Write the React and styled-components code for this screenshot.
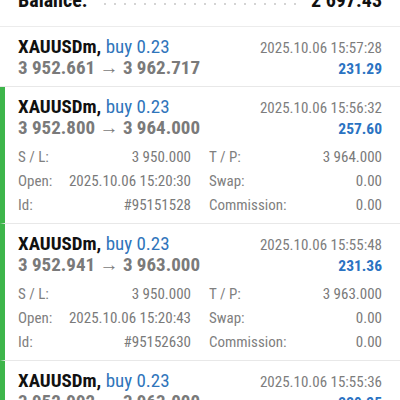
import React from 'react';
import styled, { createGlobalStyle } from 'styled-components';

const GlobalStyle = createGlobalStyle`
  body {
    margin: 0;
    background: #fff;
    font-family: Roboto, "Noto Sans", sans-serif;
    font-stretch: 85%;
    overflow: hidden;
  }
`;

const Page = styled.div`
  width: 400px;
  height: 400px;
  overflow: hidden;
`;

// Balance line, mostly scrolled out above the top edge
const BalanceRow = styled.div`
  display: flex;
  align-items: flex-start;
  margin-top: -10px;
  height: 36px;
  padding: 0 18px;
  border-bottom: 1px solid #ececec;
  font-size: 20px;
  line-height: 20px;
  font-weight: 700;
  color: #111;
`;

const Leader = styled.div`
  flex: 1;
  height: 2px;
  margin: 13px 12px 0 13px;
  background-image: radial-gradient(circle, #d4d4d4 1px, transparent 1.2px);
  background-size: 10px 2px;
`;

const Trade = styled.div`
  padding: 9px 18px ${(p) => (p.$open ? 6 : 8)}px;
  padding-left: ${(p) => (p.$marked ? 13 : 18)}px;
  border-left: ${(p) => (p.$marked ? '5px solid #3db54a' : 'none')};
  border-bottom: 1px solid #e8e8e8;
`;

const Line = styled.div`
  display: flex;
  justify-content: space-between;
  align-items: baseline;
  height: 21px;
  line-height: 21px;
`;

const Symbol = styled.span`
  font-size: 19px;
  font-weight: 700;
  color: #111;
`;

const Side = styled.span`
  font-size: 19px;
  color: #2f75bb;
`;

const Prices = styled.span`
  font-size: 19px;
  font-weight: 700;
  color: #7a7a7a;
`;

const Time = styled.span`
  font-size: 15px;
  color: #7d7d7d;
`;

const Profit = styled.span`
  font-size: 15.5px;
  font-weight: 700;
  color: #2a73c2;
`;

const Details = styled.div`
  display: grid;
  grid-template-columns: 1fr 1fr;
  column-gap: 18px;
  margin-top: 7px;
`;

const Field = styled.div`
  display: flex;
  justify-content: space-between;
  height: 24px;
  line-height: 24px;
  font-size: 15px;
  color: #808080;
`;

const Value = styled.span`
  color: #7a7a7a;
`;

const trades = [
  {
    time: '2025.10.06 15:57:28',
    from: '3 952.661',
    to: '3 962.717',
    profit: '231.29',
  },
  {
    time: '2025.10.06 15:56:32',
    from: '3 952.800',
    to: '3 964.000',
    profit: '257.60',
    marked: true,
    sl: '3 950.000',
    tp: '3 964.000',
    open: '2025.10.06 15:20:30',
    id: '#95151528',
  },
  {
    time: '2025.10.06 15:55:48',
    from: '3 952.941',
    to: '3 963.000',
    profit: '231.36',
    marked: true,
    sl: '3 950.000',
    tp: '3 963.000',
    open: '2025.10.06 15:20:43',
    id: '#95152630',
  },
  {
    time: '2025.10.06 15:55:36',
    from: '3 952.992',
    to: '3 963.000',
    profit: '229.35',
    marked: true,
  },
];

const TradeItem = ({ t }) => {
  const open = Boolean(t.sl);
  return (
    <Trade $marked={t.marked} $open={open}>
      <Line>
        <span>
          <Symbol>XAUUSDm, </Symbol>
          <Side>buy 0.23</Side>
        </span>
        <Time>{t.time}</Time>
      </Line>
      <Line>
        <Prices>
          {t.from} → {t.to}
        </Prices>
        <Profit>{t.profit}</Profit>
      </Line>
      {open && (
        <Details>
          <Field>
            <span>S / L:</span>
            <Value>{t.sl}</Value>
          </Field>
          <Field>
            <span>T / P:</span>
            <Value>{t.tp}</Value>
          </Field>
          <Field>
            <span>Open:</span>
            <Value>{t.open}</Value>
          </Field>
          <Field>
            <span>Swap:</span>
            <Value>0.00</Value>
          </Field>
          <Field>
            <span>Id:</span>
            <Value>{t.id}</Value>
          </Field>
          <Field>
            <span>Commission:</span>
            <Value>0.00</Value>
          </Field>
        </Details>
      )}
    </Trade>
  );
};

const App = () => (
  <Page>
    <GlobalStyle />
    <BalanceRow>
      <span>Balance:</span>
      <Leader />
      <span>2 697.43</span>
    </BalanceRow>
    {trades.map((t) => (
      <TradeItem key={t.time} t={t} />
    ))}
  </Page>
);

export default App;
